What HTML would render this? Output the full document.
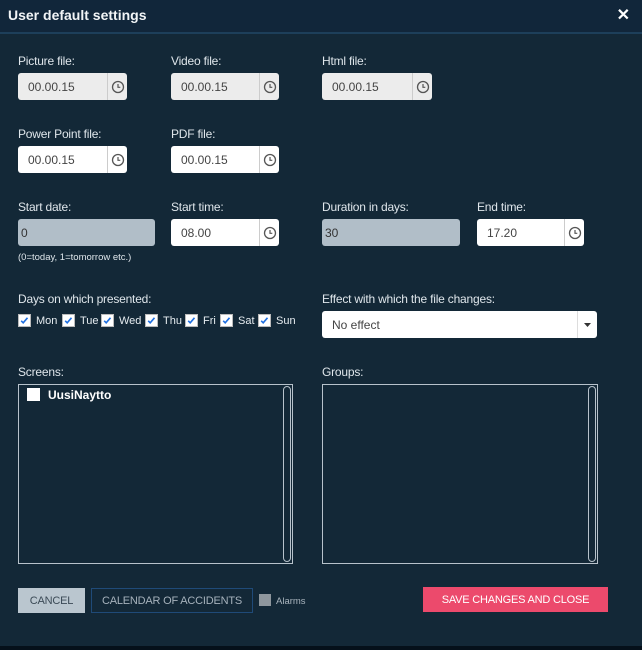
<!DOCTYPE html><html><head><style>
body{margin:0;width:642px;height:650px;background:#132837;font-family:"Liberation Sans",sans-serif;position:relative;overflow:hidden;color:#e6ecf0}
.a{position:absolute}
.hd{left:0;top:0;width:642px;height:32px;background:#11263a;border-bottom:2px solid #1d3f5a}
.t{left:8px;top:7px;font-size:14px;font-weight:bold;color:#f2f5f7}
.x{right:12px;top:5px;font-size:16px;font-weight:bold;color:#fff}
.l{font-size:12px;color:#dfe6eb;letter-spacing:-0.2px}
.in{height:27px;background:#fff;border-radius:3px;box-sizing:border-box;font-size:12px;color:#444;line-height:29px;padding-left:10px}
.g{background:#ececec}
.in .c{position:absolute;right:0;top:0;width:20px;height:27px;border-left:1px solid #ccc;box-sizing:border-box}
.in .c svg{position:absolute;left:3px;top:7px}
.dis{background:#b1bec8;height:27px;border-radius:3px;font-size:12px;color:#333;line-height:29px;padding-left:3px;box-sizing:border-box}
.day{top:314px;font-size:11px;display:flex;align-items:center;gap:5px}
.box{border:1px solid #b7c2cb;box-sizing:border-box}
.sb{position:absolute;right:1px;top:1px;width:8px;bottom:1px;border:1px solid #b7c2cb;border-radius:5px;box-sizing:border-box}
.bt{font-size:11px;text-align:center;letter-spacing:-0.2px}
</style></head><body>
<div class="a hd"></div><div class="a t">User default settings</div><div class="a x">✕</div>
<svg width="0" height="0" style="position:absolute"><defs><g id="ck"><circle cx="7" cy="7" r="5.5" fill="none" stroke="#555" stroke-width="1.3"/><path d="M7 4v3.3h2.3" fill="none" stroke="#555" stroke-width="1.2"/></g></defs></svg>

<div class="a l" style="left:18px;top:54px">Picture file:</div>
<div class="a l" style="left:171px;top:54px">Video file:</div>
<div class="a l" style="left:322px;top:54px">Html file:</div>
<div class="a in g" style="left:18px;top:73px;width:109px">00.00.15<div class="c"><svg width="14" height="14"><use href="#ck"/></svg></div></div>
<div class="a in g" style="left:171px;top:73px;width:108px">00.00.15<div class="c"><svg width="14" height="14"><use href="#ck"/></svg></div></div>
<div class="a in g" style="left:322px;top:73px;width:110px">00.00.15<div class="c"><svg width="14" height="14"><use href="#ck"/></svg></div></div>

<div class="a l" style="left:18px;top:127px">Power Point file:</div>
<div class="a l" style="left:171px;top:127px">PDF file:</div>
<div class="a in" style="left:18px;top:146px;width:109px">00.00.15<div class="c"><svg width="14" height="14"><use href="#ck"/></svg></div></div>
<div class="a in" style="left:171px;top:146px;width:108px">00.00.15<div class="c"><svg width="14" height="14"><use href="#ck"/></svg></div></div>

<div class="a l" style="left:18px;top:200px">Start date:</div>
<div class="a l" style="left:171px;top:200px">Start time:</div>
<div class="a l" style="left:322px;top:200px">Duration in days:</div>
<div class="a l" style="left:477px;top:200px">End time:</div>
<div class="a dis" style="left:18px;top:219px;width:137px">0</div>
<div class="a in" style="left:171px;top:219px;width:108px">08.00<div class="c"><svg width="14" height="14"><use href="#ck"/></svg></div></div>
<div class="a dis" style="left:322px;top:219px;width:138px">30</div>
<div class="a in" style="left:477px;top:219px;width:107px">17.20<div class="c"><svg width="14" height="14"><use href="#ck"/></svg></div></div>
<div class="a" style="left:18px;top:252px;font-size:9.5px;color:#dfe6eb">(0=today, 1=tomorrow etc.)</div>

<div class="a l" style="left:18px;top:292px">Days on which presented:</div>
<div class="a l" style="left:322px;top:292px">Effect with which the file changes:</div>
<svg width="0" height="0" style="position:absolute"><defs><g id="tk"><rect x="0.5" y="0.5" width="12" height="12" fill="#fff" stroke="#bbb"/><path d="M3.2 6.8l2 2 4.3-5" fill="none" stroke="#1f6fe0" stroke-width="1.6"/></g></defs></svg>
<div class="a day" style="left:18px"><svg width="13" height="13"><use href="#tk"/></svg>Mon</div>
<div class="a day" style="left:62px"><svg width="13" height="13"><use href="#tk"/></svg>Tue</div>
<div class="a day" style="left:101px"><svg width="13" height="13"><use href="#tk"/></svg>Wed</div>
<div class="a day" style="left:145px"><svg width="13" height="13"><use href="#tk"/></svg>Thu</div>
<div class="a day" style="left:185px"><svg width="13" height="13"><use href="#tk"/></svg>Fri</div>
<div class="a day" style="left:220px"><svg width="13" height="13"><use href="#tk"/></svg>Sat</div>
<div class="a day" style="left:258px"><svg width="13" height="13"><use href="#tk"/></svg>Sun</div>
<div class="a in" style="left:322px;top:311px;width:275px">No effect<div class="c" style="border-left:1px solid #ddd"><svg width="14" height="14"><path d="M3 4h7l-3.5 4z" fill="#333" transform="translate(0,1)"/></svg></div></div>

<div class="a l" style="left:18px;top:365px">Screens:</div>
<div class="a l" style="left:322px;top:365px">Groups:</div>
<div class="a box" style="left:18px;top:384px;width:275px;height:180px"><div class="sb"></div>
<div style="position:absolute;left:8px;top:3px;width:13px;height:13px;background:#fff"></div>
<div style="position:absolute;left:29px;top:3px;font-size:12px;font-weight:bold;color:#fff">UusiNaytto</div></div>
<div class="a box" style="left:322px;top:384px;width:276px;height:180px"><div class="sb"></div></div>

<div class="a bt" style="left:18px;top:588px;width:67px;height:25px;background:#bac6cf;color:#3b4a56;line-height:27px">CANCEL</div>
<div class="a bt" style="left:91px;top:588px;width:162px;height:25px;border:1px solid #1f4a78;box-sizing:border-box;color:#a6b2bc;line-height:25px">CALENDAR OF ACCIDENTS</div>
<div class="a" style="left:259px;top:594px;width:12px;height:12px;background:#8e969d"></div>
<div class="a" style="left:276px;top:596px;font-size:9.5px;color:#aab5be">Alarms</div>
<div class="a bt" style="left:423px;top:587px;width:185px;height:25px;background:#ec4a6c;color:#fff;line-height:27px">SAVE CHANGES AND CLOSE</div>
<div class="a" style="left:0;top:646px;width:642px;height:4px;background:#05101a"></div>
</body></html>
